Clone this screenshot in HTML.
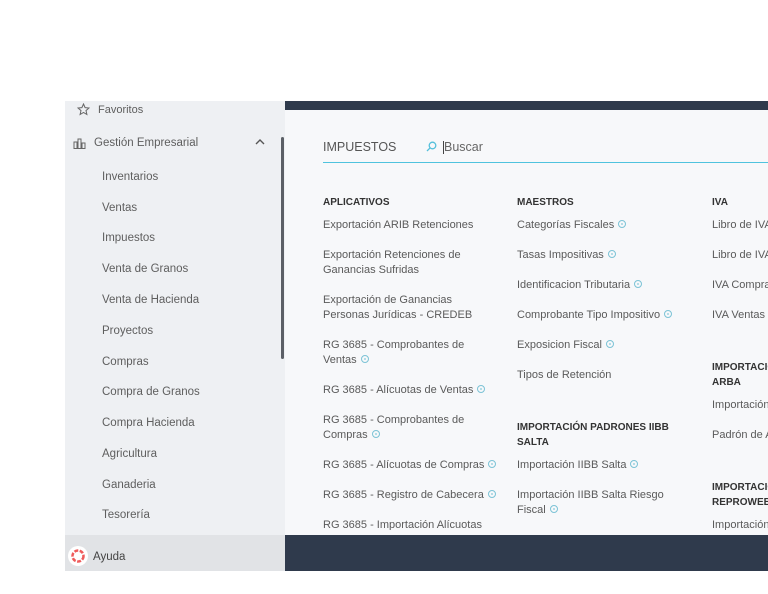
<!DOCTYPE html>
<html><head><meta charset="utf-8"><style>
*{margin:0;padding:0;box-sizing:border-box}
body{width:768px;height:594px;background:#fff;position:relative;overflow:hidden;font-family:"Liberation Sans",sans-serif;color:#5a5a5a}
.a{position:absolute;white-space:nowrap;font-size:11px;line-height:15px}
.h{font-weight:bold;font-size:10px;color:#333;line-height:14px}
.q{display:inline-block;width:8px;height:8px;border:1px solid #7cc3d6;border-radius:50%;margin-left:4px;vertical-align:0;position:relative}
.q:after{content:"";position:absolute;left:2px;top:2px;width:2px;height:2px;background:#9fd3e0;border-radius:50%}
.s{position:absolute;font-size:11.5px;color:#5e5e5e;white-space:nowrap}
</style></head><body>
<div style="position:absolute;left:65px;top:101px;width:220px;height:434px;background:#eef0f3"></div>
<div style="position:absolute;left:65px;top:535px;width:220px;height:36px;background:#e1e3e6"></div>
<div style="position:absolute;left:281px;top:137px;width:3px;height:222px;background:#5b5f66;border-radius:2px"></div>
<div style="position:absolute;left:285px;top:101px;width:483px;height:9px;background:#2f3a4c"></div>
<div style="position:absolute;left:285px;top:110px;width:483px;height:425px;background:#f7f8fa;overflow:hidden">
<div style="position:absolute;left:38px;top:52px;width:460px;height:1px;background:#4fc3de"></div>
</div>
<div style="position:absolute;left:285px;top:535px;width:483px;height:36px;background:#2f3a4c"></div>

<svg style="position:absolute;left:77px;top:103px" width="13" height="13" viewBox="0 0 13 13"><path d="M6.5 1l1.6 3.6 3.9.4-3 2.6.9 3.9-3.4-2-3.4 2 .9-3.9-3-2.6 3.9-.4z" fill="none" stroke="#666" stroke-width="1"/></svg>
<div class="s" style="left:98px;top:104px;font-size:11px">Favoritos</div>
<svg style="position:absolute;left:73px;top:138px" width="13" height="11" viewBox="0 0 13 11"><path d="M1 10V4h3v6M5 10V1h3v9M9 10V5h3v5M0.5 10.5h12" fill="none" stroke="#666" stroke-width="1"/></svg>
<div class="s" style="left:94px;top:137px">Gestión Empresarial</div>
<svg style="position:absolute;left:255px;top:138px" width="10" height="7" viewBox="0 0 10 7"><path d="M1 6l4-4 4 4" fill="none" stroke="#555" stroke-width="1.4"/></svg>
<div class="s" style="left:102px;top:171px">Inventarios</div>
<div class="s" style="left:102px;top:202px">Ventas</div>
<div class="s" style="left:102px;top:232px">Impuestos</div>
<div class="s" style="left:102px;top:263px">Venta de Granos</div>
<div class="s" style="left:102px;top:294px">Venta de Hacienda</div>
<div class="s" style="left:102px;top:325px">Proyectos</div>
<div class="s" style="left:102px;top:356px">Compras</div>
<div class="s" style="left:102px;top:386px">Compra de Granos</div>
<div class="s" style="left:102px;top:417px">Compra Hacienda</div>
<div class="s" style="left:102px;top:448px">Agricultura</div>
<div class="s" style="left:102px;top:479px">Ganaderia</div>
<div class="s" style="left:102px;top:509px">Tesorería</div>
<div style="position:absolute;left:68px;top:546px;width:20px;height:20px;border-radius:50%;background:#fff"></div>
<svg style="position:absolute;left:71px;top:549px" width="14" height="14" viewBox="0 0 14 14"><circle cx="7" cy="7" r="5.5" fill="none" stroke="#ef5b5b" stroke-width="2.5" stroke-dasharray="4 1.5"/><circle cx="7" cy="7" r="2" fill="#fff"/></svg>
<div class="s" style="left:93px;top:551px;color:#444">Ayuda</div>

<div class="a" style="left:323px;top:140px;font-size:12.5px;color:#555">IMPUESTOS</div>
<svg style="position:absolute;left:426px;top:141px" width="11" height="11" viewBox="0 0 11 11"><circle cx="6.5" cy="4.5" r="3.3" fill="none" stroke="#55c0db" stroke-width="1.3"/><path d="M4.2 6.8L1 10" stroke="#55c0db" stroke-width="1.3"/></svg>
<div style="position:absolute;left:443px;top:141px;width:1px;height:13px;background:#444"></div>
<div class="a" style="left:444px;top:140px;font-size:12.5px;color:#666">Buscar</div>

<div style="position:absolute;left:285px;top:110px;width:483px;height:420px;overflow:hidden">
<div style="position:absolute;left:-285px;top:-108px">
<div class="a h" style="left:323px;top:194px">APLICATIVOS</div>
<div class="a" style="left:323px;top:216px">Exportación ARIB Retenciones</div>
<div class="a" style="left:323px;top:246px">Exportación Retenciones de<br>Ganancias Sufridas</div>
<div class="a" style="left:323px;top:291px">Exportación de Ganancias<br>Personas Jurídicas - CREDEB</div>
<div class="a" style="left:323px;top:336px">RG 3685 - Comprobantes de<br>Ventas<span class="q"></span></div>
<div class="a" style="left:323px;top:381px">RG 3685 - Alícuotas de Ventas<span class="q"></span></div>
<div class="a" style="left:323px;top:411px">RG 3685 - Comprobantes de<br>Compras<span class="q"></span></div>
<div class="a" style="left:323px;top:456px">RG 3685 - Alícuotas de Compras<span class="q"></span></div>
<div class="a" style="left:323px;top:486px">RG 3685 - Registro de Cabecera<span class="q"></span></div>
<div class="a" style="left:323px;top:516px">RG 3685 - Importación Alícuotas</div>

<div class="a h" style="left:517px;top:194px">MAESTROS</div>
<div class="a" style="left:517px;top:216px">Categorías Fiscales<span class="q"></span></div>
<div class="a" style="left:517px;top:246px">Tasas Impositivas<span class="q"></span></div>
<div class="a" style="left:517px;top:276px">Identificacion Tributaria<span class="q"></span></div>
<div class="a" style="left:517px;top:306px">Comprobante Tipo Impositivo<span class="q"></span></div>
<div class="a" style="left:517px;top:336px">Exposicion Fiscal<span class="q"></span></div>
<div class="a" style="left:517px;top:366px">Tipos de Retención</div>
<div class="a h" style="left:517px;top:418px;line-height:15px">IMPORTACIÓN PADRONES IIBB<br>SALTA</div>
<div class="a" style="left:517px;top:456px">Importación IIBB Salta<span class="q"></span></div>
<div class="a" style="left:517px;top:486px">Importación IIBB Salta Riesgo<br>Fiscal<span class="q"></span></div>

<div class="a h" style="left:712px;top:194px">IVA</div>
<div class="a" style="left:712px;top:216px">Libro de IVA Ventas</div>
<div class="a" style="left:712px;top:246px">Libro de IVA Compras</div>
<div class="a" style="left:712px;top:276px">IVA Compras</div>
<div class="a" style="left:712px;top:306px">IVA Ventas</div>
<div class="a h" style="left:712px;top:358px;line-height:15px">IMPORTACIÓN PADRONES<br>ARBA</div>
<div class="a" style="left:712px;top:396px">Importación</div>
<div class="a" style="left:712px;top:426px">Padrón de ARBA</div>
<div class="a h" style="left:712px;top:478px;line-height:15px">IMPORTACIÓN PADRONES<br>REPROWEB</div>
<div class="a" style="left:712px;top:516px">Importación</div>
</div></div>
</body></html>
